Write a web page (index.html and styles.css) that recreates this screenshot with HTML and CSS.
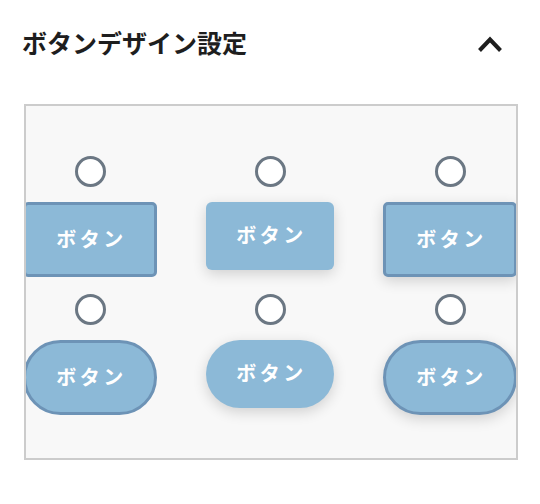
FILE: index.html
```html
<!DOCTYPE html>
<html lang="ja">
<head>
<meta charset="utf-8">
<link rel="stylesheet" href="styles.css">
</head>
<body>
<div class="panel">
  <div class="header">
    <h2 class="title">ボタンデザイン設定</h2>
    <svg class="chevron" width="26" height="24" viewBox="0 0 26 24">
      <polyline points="2.5,20.5 13,9.5 23.5,20.5" fill="none" stroke="#1e1e1e" stroke-width="4" stroke-linecap="butt" stroke-linejoin="miter"/>
    </svg>
  </div>
  <div class="box">
    <div class="grid">
      <div class="cell"><span class="radio"></span><span class="btn sq bordered">ボタン</span></div>
      <div class="cell"><span class="radio"></span><span class="btn sq shadow">ボタン</span></div>
      <div class="cell"><span class="radio"></span><span class="btn sq bordered shadow">ボタン</span></div>
      <div class="cell"><span class="radio"></span><span class="btn pill bordered">ボタン</span></div>
      <div class="cell"><span class="radio"></span><span class="btn pill shadow">ボタン</span></div>
      <div class="cell"><span class="radio"></span><span class="btn pill bordered shadow">ボタン</span></div>
    </div>
  </div>
</div>
</body>
</html>
```
FILE: styles.css
```css
html, body {
  margin: 0;
  padding: 0;
  background: #ffffff;
  font-family: "Noto Sans CJK JP", "Noto Sans", sans-serif;
}

.panel {
  width: 540px;
}

.header {
  display: flex;
  align-items: center;
  justify-content: space-between;
  height: 40px;
  padding: 22px 37px 0 22px;
}

.title {
  margin: 0;
  font-size: 25px;
  font-weight: 700;
  letter-spacing: 0;
  color: #1e1e1e;
  line-height: 40px;
}

.chevron {
  display: block;
}

.box {
  margin: 42px 0 0 24px;
  width: 490px;
  height: 352px;
  border: 2px solid #cccccc;
  background: #f8f8f8;
  overflow: hidden;
}

.grid {
  display: grid;
  grid-template-columns: repeat(3, 180px);
  row-gap: 17px;
  width: 540px;
  margin-left: -26px;
  padding-top: 50px;
}

.cell {
  display: flex;
  flex-direction: column;
  align-items: center;
}

.radio {
  box-sizing: border-box;
  width: 31px;
  height: 31px;
  border: 3.5px solid #6b7783;
  border-radius: 50%;
  background: #ffffff;
  margin-bottom: 15px;
}

.btn {
  box-sizing: border-box;
  display: flex;
  align-items: center;
  justify-content: center;
  width: 128px;
  height: 68px;
  background: #8cb9d7;
  color: #ffffff;
  font-size: 20px;
  font-weight: 700;
  letter-spacing: 3.5px;
  padding: 0 0 3px 3px;
}

.sq {
  border-radius: 6px;
}

.pill {
  border-radius: 40px;
}

.bordered {
  width: 134px;
  height: 75px;
  border: 3.5px solid #6d93b6;
}

.sq.bordered {
  border-radius: 5px;
}

.shadow {
  box-shadow: 0 4px 14px rgba(0, 0, 0, 0.16);
}
```
